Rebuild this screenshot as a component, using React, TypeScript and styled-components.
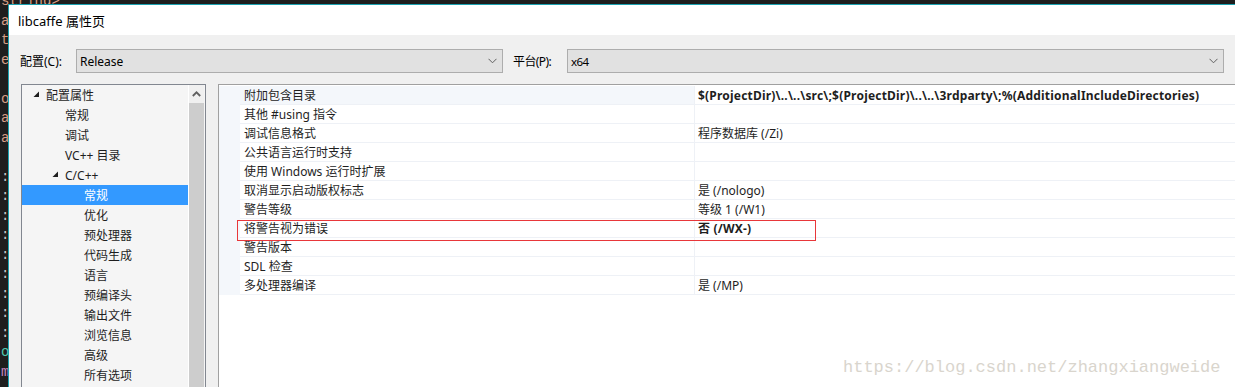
import styled, { createGlobalStyle } from "styled-components";

const GlobalStyle = createGlobalStyle`
  html, body {
    margin: 0;
    padding: 0;
    background: #1e1e1e;
  }
  * {
    box-sizing: border-box;
  }
`;

const UI_FONT = `"Noto Sans", "Noto Sans CJK SC", sans-serif`;

type TreeItem = { label: string; level: number; expanded?: boolean; selected?: boolean };

const treeItems: TreeItem[] = [
  { label: "配置属性", level: 0, expanded: true },
  { label: "常规", level: 1 },
  { label: "调试", level: 1 },
  { label: "VC++ 目录", level: 1 },
  { label: "C/C++", level: 1, expanded: true },
  { label: "常规", level: 2, selected: true },
  { label: "优化", level: 2 },
  { label: "预处理器", level: 2 },
  { label: "代码生成", level: 2 },
  { label: "语言", level: 2 },
  { label: "预编译头", level: 2 },
  { label: "输出文件", level: 2 },
  { label: "浏览信息", level: 2 },
  { label: "高级", level: 2 },
  { label: "所有选项", level: 2 },
];

type Prop = { name: string; value: string; bold?: boolean; current?: boolean };

const props: Prop[] = [
  {
    name: "附加包含目录",
    value: "$(ProjectDir)\\..\\..\\src\\;$(ProjectDir)\\..\\..\\3rdparty\\;%(AdditionalIncludeDirectories)",
    bold: true,
    current: true,
  },
  { name: "其他 #using 指令", value: "" },
  { name: "调试信息格式", value: "程序数据库 (/Zi)" },
  { name: "公共语言运行时支持", value: "" },
  { name: "使用 Windows 运行时扩展", value: "" },
  { name: "取消显示启动版权标志", value: "是 (/nologo)" },
  { name: "警告等级", value: "等级 1 (/W1)" },
  { name: "将警告视为错误", value: "否 (/WX-)", bold: true },
  { name: "警告版本", value: "" },
  { name: "SDL 检查", value: "" },
  { name: "多处理器编译", value: "是 (/MP)" },
];

// code editor behind the dialog, only the first column shows
const codeLines: { text: string; color: string }[] = [
  { text: "string>", color: "#d69d85" },
  { text: "a", color: "#d69d85" },
  { text: "t", color: "#d69d85" },
  { text: "e", color: "#d69d85" },
  { text: "", color: "#d69d85" },
  { text: "o", color: "#d69d85" },
  { text: "a", color: "#d69d85" },
  { text: "a", color: "#d69d85" },
  { text: "", color: "#d69d85" },
  { text: ":", color: "#c8c8c8" },
  { text: ":", color: "#c8c8c8" },
  { text: ":", color: "#c8c8c8" },
  { text: ":", color: "#c8c8c8" },
  { text: ":", color: "#c8c8c8" },
  { text: ":", color: "#c8c8c8" },
  { text: ":", color: "#c8c8c8" },
  { text: ":", color: "#c8c8c8" },
  { text: ":", color: "#c8c8c8" },
  { text: "o", color: "#4ec9b0" },
  { text: "m", color: "#c586c0" },
];

const Chevron = () => (
  <svg width="9" height="6" viewBox="0 0 9 6">
    <polyline points="0.5,0.8 4.5,4.8 8.5,0.8" fill="none" stroke="#606060" strokeWidth="1" />
  </svg>
);

const Expander = () => (
  <svg width="7" height="7" viewBox="0 0 7 7">
    <polygon points="6,0.5 6,6 0.5,6" fill="#1e1e1e" />
  </svg>
);

const ScrollUp = () => (
  <svg width="9" height="6" viewBox="0 0 9 6">
    <polyline points="0.8,5 4.5,1.3 8.2,5" fill="none" stroke="#606060" strokeWidth="1.8" />
  </svg>
);

export default function App() {
  return (
    <>
      <GlobalStyle />
      <Page>
        <CodeBehind>
          {codeLines.map((l, i) => (
            <CodeLine key={i} $color={l.color}>
              {l.text || "\u00a0"}
            </CodeLine>
          ))}
        </CodeBehind>
        <Dialog>
          <TitleBar>libcaffe 属性页</TitleBar>
          <Body>
            <ConfigRow>
              <FieldLabel>配置(C):</FieldLabel>
              <Select $width="427px">
                <span>Release</span>
                <Chevron />
              </Select>
              <FieldLabel $narrow>平台(P):</FieldLabel>
              <Select $narrow>
                <span>x64</span>
                <Chevron />
              </Select>
            </ConfigRow>
            <Panels>
              <TreePanel>
                <TreeList>
                  {treeItems.map((t, i) => (
                    <TreeRow key={i} $level={t.level} $selected={t.selected}>
                      <Toggle>{t.expanded && <Expander />}</Toggle>
                      {t.label}
                    </TreeRow>
                  ))}
                </TreeList>
                <Scrollbar>
                  <ScrollButton>
                    <ScrollUp />
                  </ScrollButton>
                  <ScrollThumb />
                </Scrollbar>
              </TreePanel>
              <GridPanel>
                {props.map((p, i) => (
                  <PropRow key={i}>
                    <Gutter />
                    <NameCell $current={p.current}>{p.name}</NameCell>
                    <ValueCell $bold={p.bold}>{p.value}</ValueCell>
                  </PropRow>
                ))}
                <Highlight />
              </GridPanel>
            </Panels>
          </Body>
        </Dialog>
        <Watermark>https://blog.csdn.net/zhangxiangweide</Watermark>
      </Page>
    </>
  );
}

const Page = styled.div`
  position: relative;
  width: 1235px;
  height: 387px;
  overflow: hidden;
  background: #1e1e1e;
`;

const CodeBehind = styled.div`
  padding: 0 0 0 1px;
  margin-top: -8px;
  font-family: "Liberation Mono", monospace;
  font-size: 14px;
  line-height: 19.5px;
`;

const CodeLine = styled.div<{ $color: string }>`
  color: ${(p) => p.$color};
  white-space: pre;
`;

const Dialog = styled.div`
  position: absolute;
  left: 8px;
  top: 4px;
  right: -20px;
  bottom: -20px;
  display: flex;
  flex-direction: column;
  border-left: 1px solid #1ba1b0;
  border-top: 1px solid #1ba1b0;
  font-family: ${UI_FONT};
  font-size: 12px;
  color: #1e1e1e;
`;

const TitleBar = styled.div`
  height: 30px;
  padding: 0 0 0 9px;
  display: flex;
  align-items: center;
  background: #ffffff;
  font-size: 13px;
  color: #000;
`;

const Body = styled.div`
  flex: 1;
  display: flex;
  flex-direction: column;
  padding: 14px 31px 0 11px;
  background: #f0f0f0;
  overflow: hidden;
`;

const ConfigRow = styled.div`
  height: 24px;
  display: flex;
  align-items: center;
`;

const FieldLabel = styled.div<{ $narrow?: boolean }>`
  width: ${(p) => (p.$narrow ? "64px" : "56px")};
  padding-left: ${(p) => (p.$narrow ? "10px" : "0")};
  font-size: 12px;
  letter-spacing: ${(p) => (p.$narrow ? "-0.6px" : "0")};
  color: #000;
  white-space: nowrap;
`;

const Select = styled.div<{ $width?: string; $narrow?: boolean }>`
  ${(p) => (p.$width ? `width: ${p.$width};` : "flex: 1;")}
  height: 24px;
  display: flex;
  align-items: center;
  justify-content: space-between;
  padding: 0 5px 0 3px;
  background: #e1e1e1;
  border: 1px solid #adadad;
  font-size: ${(p) => (p.$narrow ? "11.5px" : "12px")};
  letter-spacing: ${(p) => (p.$narrow ? "-0.6px" : "0")};
  color: #000;
`;

const Panels = styled.div`
  margin-top: 11px;
  height: 330px;
  display: flex;
  gap: 12px;
  padding-left: 1px;
  margin-right: -40px;
`;

const TreePanel = styled.div`
  width: 185px;
  display: flex;
  background: #f5f5f5;
  border: 1px solid #828790;
`;

const TreeList = styled.div`
  flex: 1;
  display: flex;
  flex-direction: column;
`;

const TreeRow = styled.div<{ $level: number; $selected?: boolean }>`
  height: 20px;
  display: flex;
  align-items: center;
  padding-left: ${(p) => 11 + p.$level * 19}px;
  background: ${(p) => (p.$selected ? "#3399ff" : "transparent")};
  color: ${(p) => (p.$selected ? "#ffffff" : "#1e1e1e")};
  white-space: nowrap;
`;

const Toggle = styled.span`
  width: 13px;
  display: flex;
  align-items: center;
  padding-bottom: 1px;
`;

const Scrollbar = styled.div`
  width: 17px;
  display: flex;
  flex-direction: column;
  border-left: 1px solid #ffffff;
  padding-right: 1px;
`;

const ScrollButton = styled.div`
  height: 18px;
  display: flex;
  align-items: center;
  justify-content: center;
  background: #f0f0f0;
`;

const ScrollThumb = styled.div`
  flex: 1;
  background: #cdcdcd;
`;

const GridPanel = styled.div`
  position: relative;
  flex: 1;
  background: #ffffff;
  border: 1px solid #a0a0a0;
`;

const PropRow = styled.div`
  height: 19px;
  display: grid;
  grid-template-columns: 21px 455px 1fr;
  padding-top: 1px;
`;

const Gutter = styled.div`
  background: #f4f7fb;
`;

const NameCell = styled.div<{ $current?: boolean }>`
  display: flex;
  align-items: center;
  padding-left: 4px;
  background: ${(p) => (p.$current ? "#f4f7fb" : "#ffffff")};
  border-bottom: 1px solid #eef1f6;
  border-right: 1px solid #eef1f6;
  white-space: nowrap;
`;

const ValueCell = styled.div<{ $bold?: boolean }>`
  display: flex;
  align-items: center;
  padding-left: 3px;
  border-bottom: 1px solid #eef1f6;
  font-weight: ${(p) => (p.$bold ? 700 : 400)};
  letter-spacing: ${(p) => (p.$bold ? "0.2px" : "0")};
  white-space: nowrap;
  overflow: hidden;
`;

const Highlight = styled.div`
  position: absolute;
  left: 18px;
  top: 135px;
  width: 579px;
  height: 21px;
  border: 1px solid #e8373a;
  pointer-events: none;
`;

const Watermark = styled.div`
  position: absolute;
  left: 843px;
  top: 357px;
  font-family: "Liberation Mono", monospace;
  font-size: 17px;
  line-height: 22px;
  color: #d9d5cd;
  white-space: nowrap;
`;
